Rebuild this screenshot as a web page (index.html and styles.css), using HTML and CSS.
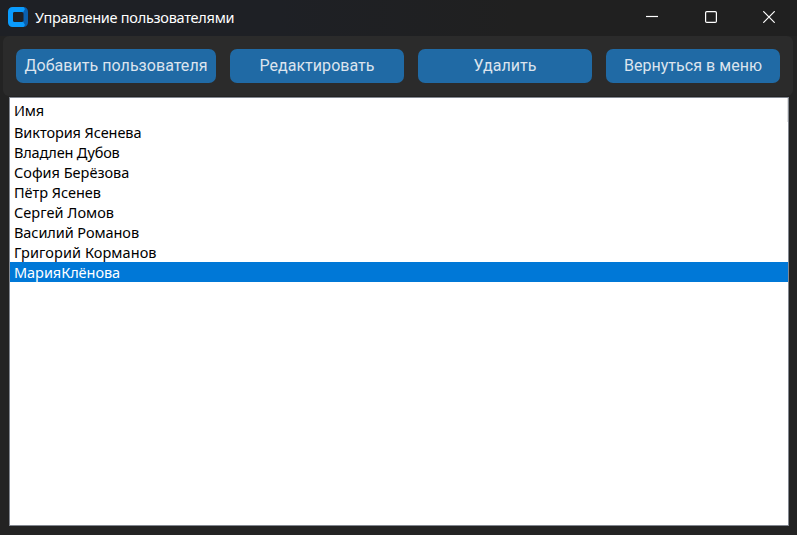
FILE: index.html
```html
<!DOCTYPE html>
<html lang="ru">
<head>
<meta charset="utf-8">
<title>Управление пользователями</title>
<link rel="stylesheet" href="styles.css">
</head>
<body>
<div class="window">
  <header class="titlebar">
    <svg class="logo" width="20" height="20" viewBox="0 0 20 20">
      <path fill="#0a5fae" d="M14 0h1.500a4.500 4.500 0 0 1 4.500 4.500v11a4.500 4.500 0 0 1-4.500 4.500H14z"/>
      <path fill="#0a9bfd" fill-rule="evenodd" d="M4.500 0H15.500L17 2 15 5.500 13.500 5H7A2 2 0 0 0 5 7v6a2 2 0 0 0 2 2h6.500L15 14.500 17 18 15.500 20h-11A4.500 4.500 0 0 1 0 15.500v-11A4.500 4.500 0 0 1 4.500 0z"/>
      <rect x="5" y="5" width="10.500" height="10" rx="1.800" fill="#1e2025"/>
    </svg>
    <h1 class="title">Управление пользователями</h1>
    <div class="controls">
      <svg width="12" height="12" viewBox="0 0 12 12"><path d="M0 5.500h12"/></svg>
      <svg width="12" height="12" viewBox="0 0 12 12"><rect x=".6" y=".6" width="10.800" height="10.800" rx="1.200"/></svg>
      <svg width="12" height="12" viewBox="0 0 12 12"><path d="M.3.300l11.400 11.400M11.700.300L.3 11.700"/></svg>
    </div>
  </header>
  <nav class="toolbar">
    <button class="btn btn-add">Добавить пользователя</button>
    <button class="btn">Редактировать</button>
    <button class="btn">Удалить</button>
    <button class="btn">Вернуться в меню</button>
  </nav>
  <main class="table">
    <div class="head"><span>Имя</span></div>
    <div class="row"><span class="n1">Виктория Ясенева</span></div>
    <div class="row"><span class="n2">Владлен Дубов</span></div>
    <div class="row"><span class="n3">София Берёзова</span></div>
    <div class="row"><span class="n4">Пётр Ясенев</span></div>
    <div class="row"><span class="n5">Сергей Ломов</span></div>
    <div class="row"><span class="n6">Василий Романов</span></div>
    <div class="row"><span class="n7">Григорий Корманов</span></div>
    <div class="row selected"><span class="n8">МарияКлёнова</span></div>
  </main>
</div>
</body>
</html>
```
FILE: styles.css
```css
* { box-sizing: border-box; }
body { margin: 0; background: #232323; }
.window {
  width: 797px;
  height: 535px;
  display: flex;
  flex-direction: column;
  background: #232323;
  overflow: hidden;
}
.titlebar {
  height: 36px;
  flex: none;
  display: flex;
  align-items: center;
  padding: 0 22px 2px 8px;
  background: linear-gradient(90deg, #1e2025 0, #1e2025 35%, #202020 65%);
}
.logo { flex: none; }
.title {
  margin: 0 0 1px 7px;
  font: 400 14.5px/20px "Noto Sans", sans-serif;
  letter-spacing: -0.27px;
  color: #fff;
  white-space: nowrap;
}
.controls { margin-left: auto; display: flex; gap: 46.5px; }
.controls svg { fill: none; stroke: #fff; stroke-width: 1.2; }
.toolbar {
  height: 60px;
  flex: none;
  margin: 0 4px 0 3px;
  padding: 13px;
  display: flex;
  gap: 14px;
  border-radius: 6px;
  background: #2b2b2b;
}
.btn {
  width: 174px;
  height: 34px;
  padding: 0 0 1px;
  border: 0;
  border-radius: 7px;
  background: #206aa5;
  color: #dce4ee;
  font: 400 16px/20px Roboto, sans-serif;
  letter-spacing: 0.04px;
  white-space: nowrap;
}
.btn-add { width: 200px; }
.table {
  width: 780px;
  height: 429px;
  margin: 1px 0 0 9px;
  border: 1px solid #828790;
  background: #fff;
  color: #000;
  font: 400 14.5px/20px "Noto Sans", sans-serif;
  letter-spacing: -0.2px;
}
.head { height: 24px; padding: 2px 4px 0; border-right: 1px solid #e0e0e0; }
.row { height: 20px; padding: 0 4px; white-space: nowrap; }
.selected { background: #0078d7; color: #fff; }
.n1 { letter-spacing: -0.08px; }
.n3 { letter-spacing: 0; }
.n4 { letter-spacing: -0.02px; }
.n5 { letter-spacing: 0.03px; }
.n6 { letter-spacing: -0.07px; }
.n7 { letter-spacing: 0.08px; }
.n8 { letter-spacing: -0.05px; }
```
